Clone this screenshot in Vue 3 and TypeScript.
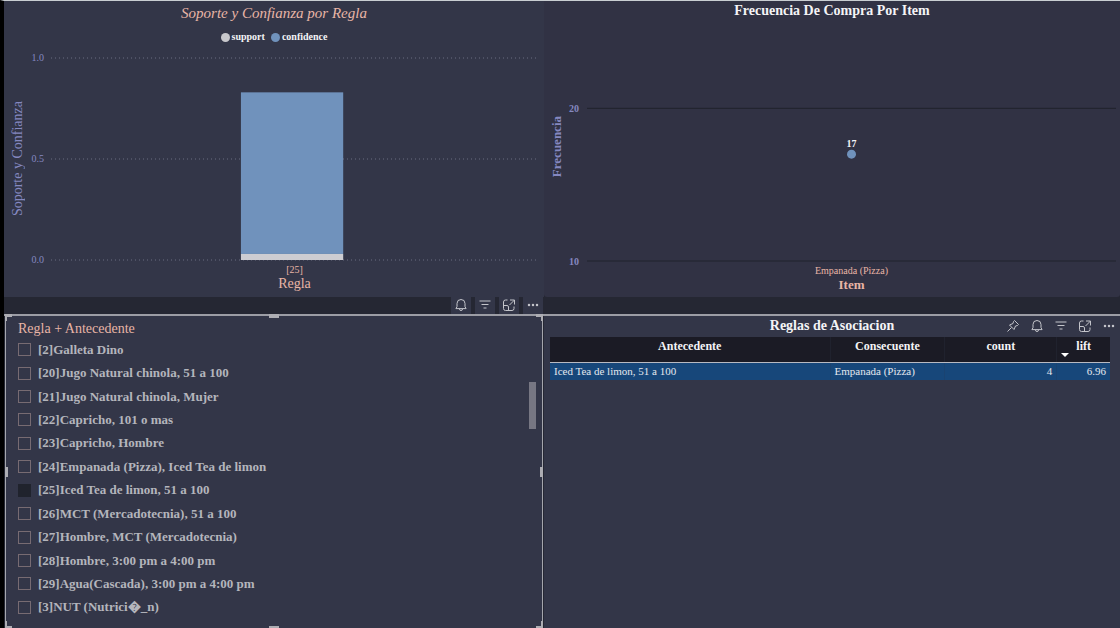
<script setup lang="ts">
import { computed, ref } from 'vue'

type IconName = 'pin' | 'bell' | 'filter' | 'focus' | 'more'

interface Tool {
  icon: IconName
  label: string
}

interface Rule {
  id: string
  text: string
  checked: boolean
}

const tools: Tool[] = [
  { icon: 'bell', label: 'Alerta' },
  { icon: 'filter', label: 'Filtros' },
  { icon: 'focus', label: 'Modo de enfoque' },
  { icon: 'more', label: 'Más opciones' },
]

const tableTools: Tool[] = [{ icon: 'pin', label: 'Anclar' }, ...tools]

const iconPaths: Record<IconName, string> = {
  pin: 'M8.5 1.5 12.5 5.5 11.5 6.5 9.5 7 8 10.5 3.5 6 7 4.5 7.5 2.5zM5.5 8.5 1.5 12.5',
  bell: 'M7 1.5a4 4 0 0 0-4 4v3L1.9 10.6h10.2L11 8.5v-3a4 4 0 0 0-4-4zM5.5 11a1.5 1.5 0 0 0 3 0',
  filter: 'M1.5 3h11M3.500 6.500h7M5.500 10h3',
  focus:
    'M5.500 2H3.500a2 2 0 0 0-2 2v6.500a2 2 0 0 0 2 2H10a2 2 0 0 0 2-2V8.500M8 2h4.500v4.500M12.500 2 7.500 7M1.500 7.500h3.500a1.500 1.500 0 0 1 1.500 1.500v3.500',
  more: 'M3 7h.01M7 7h.01M11 7h.01',
}

const rules = ref<Rule[]>([
  { id: '2', text: 'Galleta Dino', checked: false },
  { id: '20', text: 'Jugo Natural chinola, 51 a 100', checked: false },
  { id: '21', text: 'Jugo Natural chinola, Mujer', checked: false },
  { id: '22', text: 'Capricho, 101 o mas', checked: false },
  { id: '23', text: 'Capricho, Hombre', checked: false },
  { id: '24', text: 'Empanada (Pizza), Iced Tea de limon', checked: false },
  { id: '25', text: 'Iced Tea de limon, 51 a 100', checked: true },
  { id: '26', text: 'MCT (Mercadotecnia), 51 a 100', checked: false },
  { id: '27', text: 'Hombre, MCT (Mercadotecnia)', checked: false },
  { id: '28', text: 'Hombre, 3:00 pm a 4:00 pm', checked: false },
  { id: '29', text: 'Agua(Cascada), 3:00 pm a 4:00 pm', checked: false },
  { id: '3', text: 'NUT (Nutrici\uFFFD_n)', checked: false },
])

const support = 0.03
const confidence = 0.8
const barTicks = [1, 0.5, 0]

const pct = (n: number): string => `${n * 100}%`

const freqMin = 10
const freqMax = 25
const freqTicks = [20, 10]
const frequency = 17
const freqY = (v: number): string => pct((freqMax - v) / (freqMax - freqMin))
const pointY = computed(() => freqY(frequency))

const handles = ['tl', 'tc', 'tr', 'ml', 'mr', 'bl', 'bc', 'br']
</script>

<template>
  <main class="board">
    <section class="visual chart bars">
      <h2 class="title">Soporte y Confianza por Regla</h2>
      <ul class="legend">
        <li><i class="dot support"></i>support</li>
        <li><i class="dot confidence"></i>confidence</li>
      </ul>
      <div class="chart-body">
        <div class="y-title"><span>Soporte y Confianza</span></div>
        <svg class="plot">
          <g v-for="t in barTicks" :key="t">
            <line class="dotted" x1="0" x2="100%" :y1="pct(1 - t)" :y2="pct(1 - t)" />
            <text class="tick" x="-7" :y="pct(1 - t)" dy="3" text-anchor="end">{{ t.toFixed(1) }}</text>
          </g>
          <rect class="fill-confidence" x="39%" width="21%" :y="pct(1 - support - confidence)" :height="pct(confidence)" />
          <rect class="fill-support" x="39%" width="21%" :y="pct(1 - support)" :height="pct(support)" />
        </svg>
        <div class="x-tick">[25]</div>
        <div class="x-title">Regla</div>
      </div>
    </section>

    <section class="visual chart points">
      <h2 class="title">Frecuencia De Compra Por Item</h2>
      <div class="chart-body">
        <div class="y-title"><span>Frecuencia</span></div>
        <svg class="plot">
          <g v-for="t in freqTicks" :key="t">
            <line class="solid" x1="0" x2="100%" :y1="freqY(t)" :y2="freqY(t)" />
            <text class="tick" x="-8" :y="freqY(t)" dy="4" text-anchor="end">{{ t }}</text>
          </g>
          <circle class="fill-confidence" cx="50%" :cy="pointY" r="4.500" />
          <text class="value" x="50%" :y="pointY" dy="-7" text-anchor="middle">{{ frequency }}</text>
        </svg>
        <div class="x-tick">Empanada (Pizza)</div>
        <div class="x-title">Item</div>
      </div>
    </section>

    <div class="band">
      <div class="tools">
        <button v-for="t in tools" :key="t.icon" type="button" class="tool tab" :aria-label="t.label">
          <svg viewBox="0 0 14 14" width="14" height="14" :class="t.icon"><path :d="iconPaths[t.icon]" /></svg>
        </button>
      </div>
    </div>

    <section class="visual slicer">
      <i v-for="h in handles" :key="h" class="handle" :class="h"></i>
      <h2 class="title">Regla + Antecedente</h2>
      <div class="slicer-body">
        <ul class="rules">
          <li v-for="r in rules" :key="r.id">
            <label><input v-model="r.checked" type="checkbox" /><span>[{{ r.id }}]{{ r.text }}</span></label>
          </li>
        </ul>
        <div class="scroll"><div class="thumb"></div></div>
      </div>
    </section>

    <section class="visual grid-visual">
      <header class="head">
        <h2 class="title">Reglas de Asociacion</h2>
        <div class="tools">
          <button v-for="t in tableTools" :key="t.icon" type="button" class="tool" :aria-label="t.label">
            <svg viewBox="0 0 14 14" width="14" height="14" :class="t.icon"><path :d="iconPaths[t.icon]" /></svg>
          </button>
        </div>
      </header>
      <table>
        <colgroup>
          <col class="c-ante" /><col class="c-cons" /><col class="c-count" /><col class="c-lift" />
        </colgroup>
        <thead>
          <tr>
            <th scope="col">Antecedente</th>
            <th scope="col">Consecuente</th>
            <th scope="col">count</th>
            <th scope="col" class="sorted" aria-sort="descending">lift<i class="arrow"></i></th>
          </tr>
        </thead>
        <tbody>
          <tr>
            <td>Iced Tea de limon, 51 a 100</td>
            <td>Empanada (Pizza)</td>
            <td class="num">4</td>
            <td class="num">6.96</td>
          </tr>
        </tbody>
      </table>
    </section>
  </main>
</template>

<style>
body {
  margin: 0;
  background: #333648;
}
</style>

<style scoped>
.board {
  box-sizing: border-box;
  min-height: 100vh;
  display: grid;
  grid-template-columns: 540fr 576fr;
  grid-template-rows: auto auto 1fr;
  border-left: 4px solid #000;
  border-top: 1px solid #c9ced2;
  background: #252733;
  font-family: 'Liberation Serif', 'Times New Roman', serif;
  color: #f4f4f6;
}

h2,
ul {
  margin: 0;
  padding: 0;
  list-style: none;
}

.visual {
  min-width: 0;
  background: #333648;
}

.title {
  font-size: 14px;
  line-height: 20px;
  text-align: center;
}

.chart {
  display: flex;
  flex-direction: column;
}

.points {
  background: #313244;
  border-radius: 0 0 3px 3px;
}

.bars .title {
  font-size: 15px;
  line-height: 24px;
  font-weight: 400;
  font-style: italic;
  color: #e8b5a6;
}

.legend {
  display: flex;
  justify-content: center;
  gap: 6px;
  font-size: 10px;
  font-weight: 700;
  line-height: 24px;
}

.legend li {
  display: flex;
  align-items: center;
  gap: 2px;
}

.dot {
  width: 9px;
  height: 9px;
  border-radius: 50%;
}

.dot.support {
  background: #c8c8cc;
}

.dot.confidence {
  background: #7092bc;
}

.chart-body {
  display: grid;
  grid-template-columns: 28px 1fr;
  column-gap: 19px;
  padding: 9px 6px 5px 0;
}

.points .chart-body {
  grid-template-columns: 26px 1fr;
  column-gap: 17px;
  padding: 11px 4px 4px 0;
}

.y-title {
  display: flex;
  align-items: center;
  justify-content: center;
  font-size: 14px;
  line-height: 16px;
  color: #8588c0;
}

.y-title span {
  writing-mode: vertical-rl;
  transform: rotate(180deg);
}

.plot {
  display: block;
  width: 100%;
  height: 202px;
  overflow: visible;
}

.points .plot {
  height: 229px;
}

.dotted {
  stroke: #6b6d80;
  stroke-dasharray: 1 3;
}

.solid {
  stroke: #20222c;
  stroke-width: 1;
}

.tick {
  font-size: 10px;
  fill: #8588c0;
}

.value {
  font-size: 10px;
  font-weight: 700;
  fill: #f4f4f6;
}

.fill-confidence {
  fill: #7092bc;
}

.fill-support {
  fill: #cdcdd2;
}

.x-tick,
.x-title {
  grid-column: 2;
  text-align: center;
  color: #e8b5a6;
}

.x-tick {
  margin-top: 4px;
  font-size: 10px;
  line-height: 12px;
}

.x-title {
  font-size: 14px;
  line-height: 16px;
}

.points .y-title,
.points .tick,
.points .x-title {
  font-weight: 700;
}

.points .y-title,
.points .x-title {
  font-size: 13px;
}

.band {
  grid-column: 1 / -1;
  display: grid;
  grid-template-columns: 540fr 576fr;
  height: 17px;
  border-bottom: 2px solid #9c9da5;
}

.tools {
  display: flex;
  justify-content: flex-end;
  gap: 4px;
  padding-right: 1px;
}

.tool {
  display: flex;
  align-items: center;
  justify-content: center;
  width: 20px;
  padding: 0 0 2px;
  border: 0;
  background: none;
  color: #c3c4ca;
}

.tool.tab {
  background: #333648;
}

.tool svg {
  fill: none;
  stroke: currentColor;
  stroke-width: 1;
  stroke-linejoin: round;
}

.tool svg.more {
  stroke-width: 2.5;
  stroke-linecap: round;
}

.slicer {
  position: relative;
  display: flex;
  flex-direction: column;
  margin: 0 1px;
  padding: 4px 6px 9px 12px;
  border-left: 1px solid #a5a6ad;
  border-right: 1px solid #a5a6ad;
}

.slicer .title {
  line-height: 18px;
  font-weight: 400;
  text-align: left;
  color: #e8b5a6;
}

.slicer-body {
  flex: 1;
  display: flex;
  justify-content: space-between;
}

.rules {
  flex: 1;
  display: flex;
  flex-direction: column;
}

.rules li {
  flex: 1;
  display: flex;
  align-items: center;
}

.rules label {
  display: flex;
  align-items: center;
  gap: 7px;
  font-size: 13px;
  line-height: 16px;
  font-weight: 700;
  color: #b4b5bc;
}

.rules input {
  appearance: none;
  box-sizing: border-box;
  width: 13px;
  height: 13px;
  margin: 0;
  border: 1px solid #776b72;
}

.rules input:checked {
  background: #20232d;
  border-color: #20232d;
}

.scroll {
  width: 7px;
  padding-top: 44px;
}

.thumb {
  height: 47px;
  background: #777783;
}

.handle {
  position: absolute;
  box-sizing: border-box;
  width: 7px;
  height: 7px;
  border: 0 solid #adadb3;
}

.tl { top: -2px; left: -1px; border-width: 3px 0 0 2px; }
.tr { top: -2px; right: -1px; border-width: 3px 2px 0 0; }
.bl { bottom: 0; left: -1px; border-width: 0 0 2px 2px; }
.br { bottom: 0; right: -1px; border-width: 0 2px 2px 0; }
.tc { top: -2px; left: calc(50% - 5px); width: 10px; height: 4px; background: #adadb3; }
.bc { bottom: 0; left: calc(50% - 5px); width: 10px; height: 2px; background: #adadb3; }
.ml { left: -1px; top: calc(50% - 5px); width: 3px; height: 10px; background: #adadb3; }
.mr { right: -1px; top: calc(50% - 5px); width: 3px; height: 10px; background: #adadb3; }

.grid-visual {
  padding: 0 0 0 6px;
}

.head {
  display: grid;
  grid-template-columns: 1fr auto 1fr;
  height: 21px;
  margin-left: -6px;
}

.head .title {
  grid-column: 2;
}

table {
  width: calc(100% - 10px);
  table-layout: fixed;
  border-collapse: collapse;
}

.c-ante { width: 50%; }
.c-cons { width: 20.5%; }
.c-count { width: 20%; }
.c-lift { width: 9.5%; }

th {
  height: 24px;
  padding: 0 0 1px;
  background: #1b1b25;
  font-size: 12px;
  line-height: 18px;
  vertical-align: top;
  border-bottom: 1px solid #b9bac2;
}

th + th,
td + td {
  border-left: 1px solid #20222e;
}

td + td {
  border-left-color: #1a4371;
}

td {
  height: 17px;
  padding: 0 4px;
  background: #17477a;
  font-size: 11px;
  line-height: 17px;
  color: #e4e8ee;
}

.num {
  text-align: right;
}

.sorted {
  position: relative;
}

.arrow {
  position: absolute;
  left: 4px;
  bottom: 5px;
  border: 4px solid transparent;
  border-top-color: #fff;
  border-bottom: 0;
}
</style>
